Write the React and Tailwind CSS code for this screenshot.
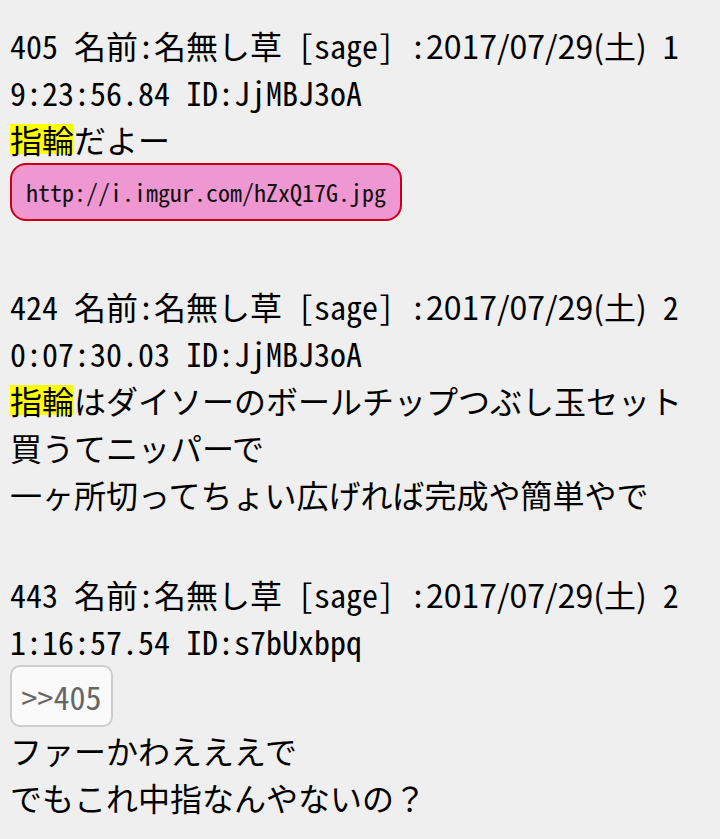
// App.jsx - thread posts view
const mono = "font-['Noto_Sans_Mono_CJK_JP','Noto_Sans_Mono','Liberation_Mono','Noto_Sans_CJK_JP',monospace]";
const sans = "font-['Noto_Sans_CJK_JP','Noto_Sans',sans-serif]";

const posts = [
  {
    no: 405,
    date: '2017/07/29(土)',
    time: '19:23:56.84',
    id: 'JjMBJ3oA',
    lines: [[{ hl: '指輪' }, 'だよー']],
    link: 'http://i.imgur.com/hZxQ17G.jpg',
  },
  {
    no: 424,
    date: '2017/07/29(土)',
    time: '20:07:30.03',
    id: 'JjMBJ3oA',
    lines: [
      [{ hl: '指輪' }, 'はダイソーのボールチップつぶし玉セット'],
      ['買うてニッパーで'],
      ['一ヶ所切ってちょい広げれば完成や簡単やで'],
    ],
  },
  {
    no: 443,
    date: '2017/07/29(土)',
    time: '21:16:57.54',
    id: 's7bUxbpq',
    anchor: '>>405',
    lines: [['ファーかわえええで'], ['でもこれ中指なんやないの？']],
  },
];

const PostHeader = ({ post }) => (
  <div className={`${mono} text-[32px] leading-[47px] break-all text-black`}>
    <span>{`${post.no} 名前:名無し草 [sage] :`}</span>
    <span className={sans}>{post.date}</span>
    <span>{` ${post.time} ID:${post.id}`}</span>
  </div>
);

const Post = ({ post }) => (
  <div className="mb-[53px]">
    <PostHeader post={post} />
    {post.anchor && (
      <div className="flex h-[62px] w-[103px] items-center justify-center rounded-[10px] border-2 border-[#cdcdcd] bg-[#fafafa]">
        <span className={`${mono} text-[32px] leading-none text-[#666666]`}>{post.anchor}</span>
      </div>
    )}
    <div className={`${sans} text-[32px] leading-[47px] text-black`}>
      {post.lines.map((line, i) => (
        <div key={i}>
          {line.map((part, j) =>
            typeof part === 'string' ? (
              <span key={j}>{part}</span>
            ) : (
              <span key={j} className="inline-block bg-[#ffff00] leading-[30px]">
                {part.hl}
              </span>
            )
          )}
        </div>
      ))}
    </div>
    {post.link && (
      <div className="mb-[62px]">
        <span
          className={`${mono} inline-block rounded-[16px] border-2 border-[#c80014] bg-[#ef97d1] px-[14px] py-[10px] text-[24px] leading-[34px] text-[#111111]`}
        >
          {post.link}
        </span>
      </div>
    )}
  </div>
);

export default function App() {
  return (
    <div className="min-h-screen w-[720px] bg-[#efefef] pl-[10px] pr-[32px] pt-[22px]">
      {posts.map((p) => (
        <Post key={p.no} post={p} />
      ))}
    </div>
  );
}
